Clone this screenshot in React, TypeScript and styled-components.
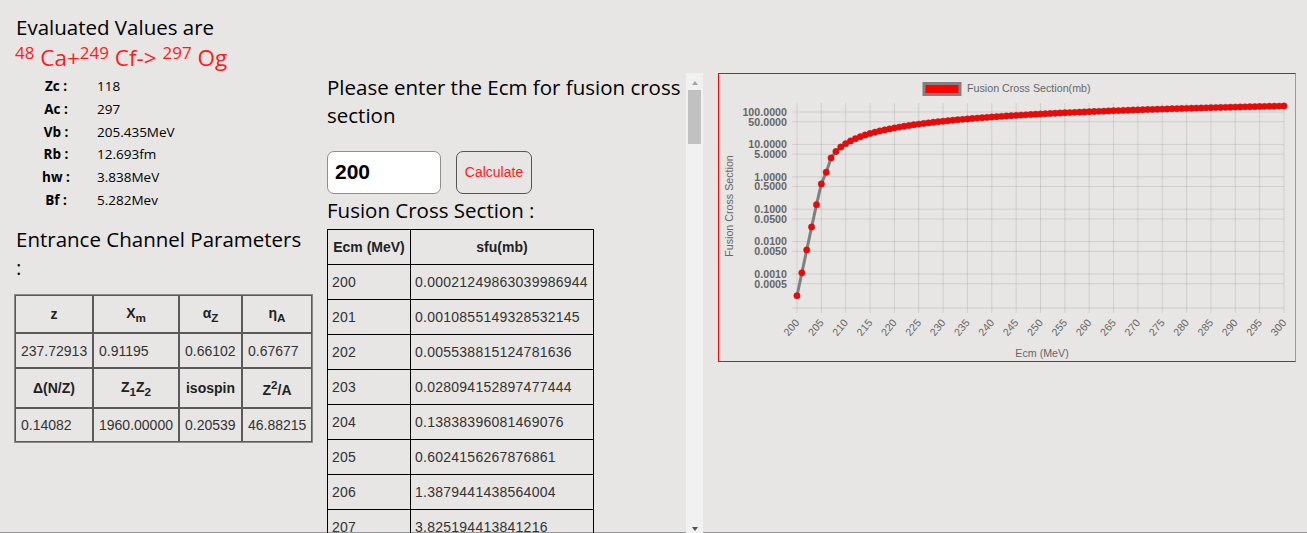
import React from 'react';
import styled, { createGlobalStyle } from 'styled-components';

const GlobalStyle = createGlobalStyle`
  html, body {
    margin: 0;
    padding: 0;
    overflow: hidden;
    background: #e7e6e5;
  }
  body {
    font-family: 'Open Sans', 'Noto Sans', sans-serif;
    color: #000;
  }
`;

const Page = styled.div`
  display: flex;
  align-items: flex-start;
  height: 533px;
  box-sizing: border-box;
  border-bottom: 1px solid #999;
`;

const LeftCol = styled.div`
  width: 313px;
  flex: none;
  box-sizing: border-box;
  padding: 13px 0 0 14px;
`;

const Heading = styled.h2<{ $top?: number; $indent?: number }>`
  margin: ${p => p.$top || 0}px 0 0 ${p => p.$indent ?? 0}px;
  font-size: 20.5px;
  font-weight: 400;
  line-height: 28px;
`;

const Reaction = styled.div`
  margin: 4px 0 0 1px;
  font-size: 22.5px;
  line-height: 26px;
  color: #ff1a1a;
`;

const Sup = styled.sup`
  font-size: 17px;
  line-height: 0;
  vertical-align: 7.5px;
`;

const ValueGrid = styled.div`
  display: grid;
  grid-template-columns: 80px auto;
  grid-auto-rows: 22.7px;
  align-items: center;
  margin: 4px 0 0 2px;
  font-size: 13.5px;
`;

const Label = styled.span`
  font-weight: 700;
  text-align: center;
`;

const Value = styled.span`
  padding-left: 1px;
`;

const ParamTable = styled.table`
  margin-top: 13px;
  table-layout: fixed;
  width: 299px;
  border-collapse: separate;
  border-spacing: 0;
  border: 1px solid #8a8a8a;
  font-family: 'Liberation Sans', Arial, sans-serif;
  font-size: 14px;
  color: #333;
`;

const Col = styled.col<{ $w: number }>`
  width: ${p => p.$w}px;
`;

const ParamRow = styled.tr<{ $h: number }>`
  height: ${p => p.$h}px;
`;

const ParamHead = styled.th`
  border: 1px solid #5a5a5a;
  padding: 0 2px;
  font-weight: 700;
  color: #222;
  text-align: center;
  white-space: nowrap;
`;

const ParamCell = styled.td`
  border: 1px solid #5a5a5a;
  padding: 0 2px 0 5px;
  white-space: nowrap;
`;

const MidPanel = styled.div`
  display: flex;
  width: 390px;
  height: 466px;
  flex: none;
  margin-top: 73px;
`;

const ScrollContent = styled.div`
  flex: 1;
  min-width: 0;
  padding-left: 14px;
  overflow: hidden;
`;

const ScrollBar = styled.div`
  display: flex;
  flex-direction: column;
  width: 17px;
  flex: none;
  background: #f1f1f1;
`;

const ArrowButton = styled.div`
  display: flex;
  justify-content: center;
  height: 17px;
  flex: none;
`;

const Arrow = styled.span<{ $down?: boolean }>`
  width: 0;
  height: 0;
  margin-top: ${p => (p.$down ? 5 : 8)}px;
  border-left: 3.5px solid transparent;
  border-right: 3.5px solid transparent;
  ${p =>
    p.$down ? 'border-top: 4px solid #505050;' : 'border-bottom: 4px solid #a3a3a3;'}
`;

const Track = styled.div`
  flex: 1;
  padding: 0 2px;
`;

const Thumb = styled.div`
  height: 54px;
  background: #c1c1c1;
`;

const InputRow = styled.div`
  display: flex;
  gap: 15px;
  margin-top: 21.5px;
`;

const EcmInput = styled.input`
  width: 114px;
  height: 43px;
  box-sizing: border-box;
  padding: 0 0 0 7px;
  border: 1px solid #8f8f8f;
  border-radius: 7px;
  background: #fff;
  font-family: 'Liberation Sans', Arial, sans-serif;
  font-size: 21px;
  font-weight: 700;
  color: #000;
  outline: none;
`;

const CalcButton = styled.button`
  width: 76px;
  height: 43px;
  padding: 0;
  border: 1px solid #555;
  border-radius: 7px;
  background: transparent;
  font-family: 'Liberation Sans', Arial, sans-serif;
  font-size: 14px;
  color: #ff1a1a;
`;

const ResultTable = styled.table`
  margin-top: 5px;
  table-layout: fixed;
  width: 266px;
  border-collapse: collapse;
  font-family: 'Liberation Sans', Arial, sans-serif;
  font-size: 14px;
  color: #333;
`;

const ResultRow = styled.tr`
  height: 35px;
`;

const ResultHead = styled.th`
  border: 1px solid #000;
  padding: 0 4px;
  font-weight: 700;
  color: #222;
  text-align: center;
  white-space: nowrap;
`;

const ResultCell = styled.td`
  border: 1px solid #000;
  padding: 0 4px;
  letter-spacing: 0.25px;
  white-space: nowrap;
`;

const ChartBox = styled.div`
  width: 578px;
  height: 289px;
  flex: none;
  margin: 73px 0 0 15px;
  box-sizing: border-box;
  border: 1px solid #ff0000;
  border-right-color: #ff7070;
`;

const ChartSvg = styled.svg`
  display: block;
  font-family: 'Liberation Sans', Arial, sans-serif;
`;

// Wong formula, roughly fitted to the plotted curve
const Rb = 12.693;
const hw = 3.838;
const Vb = 205.435;
const sigma = (e: number) =>
  (0.96 * Rb * Rb * hw) / (2 * e) * Math.log(1 + Math.exp((2 * Math.PI * (e - Vb)) / hw));

const known: Record<number, string> = {
  200: '0.00021249863039986944',
  201: '0.0010855149328532145',
  202: '0.005538815124781636',
  203: '0.028094152897477444',
  204: '0.13838396081469076',
  205: '0.6024156267876861',
  206: '1.3879441438564004',
  207: '3.825194413841216',
};

const results = Array.from({ length: 101 }, (_, i) => {
  const e = 200 + i;
  const text = known[e] ?? String(sigma(e));
  return { e, text, value: Number(text) };
});

// only the rows that show above the fold of the panel
const tableRows = results.slice(0, 8);

const values = [
  ['Zc :', '118'],
  ['Ac :', '297'],
  ['Vb :', '205.435MeV'],
  ['Rb :', '12.693fm'],
  ['hw :', '3.838MeV'],
  ['Bf :', '5.282Mev'],
];

const X0 = 78;
const X1 = 565;
const xOf = (e: number) => X0 + ((e - 200) * (X1 - X0)) / 100;
const yOf = (v: number) => 38 - (Math.log10(v) - 2) * 32.4;
const Y_TOP = 29;
const Y_BOTTOM = 234;

const yTicks = [
  [100, '100.0000'],
  [50, '50.0000'],
  [10, '10.0000'],
  [5, '5.0000'],
  [1, '1.0000'],
  [0.5, '0.5000'],
  [0.1, '0.1000'],
  [0.05, '0.0500'],
  [0.01, '0.0100'],
  [0.005, '0.0050'],
  [0.001, '0.0010'],
  [0.0005, '0.0005'],
] as const;

const xTicks = Array.from({ length: 21 }, (_, i) => 200 + i * 5);

const CrossSectionChart: React.FC = () => {
  const pts = results.map(r => [xOf(r.e), yOf(r.value)]);
  const grid = 'rgba(0,0,0,0.1)';
  return (
    <ChartSvg width="576" height="287" viewBox="0 0 576 287">
      <rect x="205" y="9.5" width="36" height="11" fill="#ff0000" stroke="#808080" strokeWidth="3" />
      <text x="248" y="18" fontSize="10.7" fill="#666">Fusion Cross Section(mb)</text>

      {xTicks.map(t => (
        <line key={t} x1={xOf(t)} x2={xOf(t)} y1={Y_TOP} y2={Y_BOTTOM + 5} stroke={grid} />
      ))}
      {yTicks.map(([v]) => (
        <line key={v} x1={X0 - 5} x2={X1} y1={yOf(v)} y2={yOf(v)} stroke={grid} />
      ))}
      <line x1={X0 - 5} x2={X1} y1={Y_BOTTOM} y2={Y_BOTTOM} stroke={grid} />

      {yTicks.map(([v, label]) => (
        <text key={label} x="68" y={yOf(v) + 3.8} fontSize="10.7" fontWeight="700" fill="#666" textAnchor="end">
          {label}
        </text>
      ))}
      {xTicks.map(t => (
        <text
          key={t}
          fontSize="10.7"
          fill="#666"
          textAnchor="end"
          transform={`translate(${xOf(t) + 3} 249) rotate(-50)`}
        >
          {t}
        </text>
      ))}
      <text x="323" y="283" fontSize="10.7" fill="#666" textAnchor="middle">Ecm (MeV)</text>
      <text fontSize="10.7" fill="#666" textAnchor="middle" transform="translate(14 132) rotate(-90)">
        Fusion Cross Section
      </text>

      <polyline
        points={pts.map(p => p.join(',')).join(' ')}
        fill="none"
        stroke="#808080"
        strokeWidth="3"
        strokeLinejoin="round"
      />
      {pts.map(([x, y], i) => (
        <circle key={i} cx={x} cy={y} r="3.2" fill="#ff0000" stroke="rgba(120,60,60,0.6)" strokeWidth="0.8" />
      ))}
    </ChartSvg>
  );
};

export default function App() {
  return (
    <>
      <GlobalStyle />
      <Page>
        <LeftCol>
          <Heading $indent={2}>Evaluated Values are</Heading>
          <Reaction>
            <Sup>48</Sup> Ca+<Sup>249</Sup> Cf-&gt; <Sup>297</Sup> Og
          </Reaction>
          <ValueGrid>
            {values.map(([k, v]) => (
              <React.Fragment key={k}>
                <Label>{k}</Label>
                <Value>{v}</Value>
              </React.Fragment>
            ))}
          </ValueGrid>
          <Heading $top={14} $indent={2}>
            Entrance Channel Parameters
            <br />:
          </Heading>
          <ParamTable>
            <colgroup>
              <Col $w={78} />
              <Col $w={86} />
              <Col $w={63} />
              <Col $w={70} />
            </colgroup>
            <tbody>
              <ParamRow $h={38}>
                <ParamHead>z</ParamHead>
                <ParamHead>X<sub>m</sub></ParamHead>
                <ParamHead>α<sub>Z</sub></ParamHead>
                <ParamHead>η<sub>A</sub></ParamHead>
              </ParamRow>
              <ParamRow $h={35}>
                <ParamCell>237.72913</ParamCell>
                <ParamCell>0.91195</ParamCell>
                <ParamCell>0.66102</ParamCell>
                <ParamCell>0.67677</ParamCell>
              </ParamRow>
              <ParamRow $h={40}>
                <ParamHead>Δ(N/Z)</ParamHead>
                <ParamHead>Z<sub>1</sub>Z<sub>2</sub></ParamHead>
                <ParamHead>isospin</ParamHead>
                <ParamHead>Z<sup>2</sup>/A</ParamHead>
              </ParamRow>
              <ParamRow $h={34}>
                <ParamCell>0.14082</ParamCell>
                <ParamCell>1960.00000</ParamCell>
                <ParamCell>0.20539</ParamCell>
                <ParamCell>46.88215</ParamCell>
              </ParamRow>
            </tbody>
          </ParamTable>
        </LeftCol>

        <MidPanel>
          <ScrollContent>
            <Heading>Please enter the Ecm for fusion cross section</Heading>
            <InputRow>
              <EcmInput defaultValue="200" />
              <CalcButton>Calculate</CalcButton>
            </InputRow>
            <Heading $top={2}>Fusion Cross Section :</Heading>
            <ResultTable>
              <colgroup>
                <Col $w={83} />
                <Col $w={183} />
              </colgroup>
              <tbody>
                <ResultRow>
                  <ResultHead>Ecm (MeV)</ResultHead>
                  <ResultHead>sfu(mb)</ResultHead>
                </ResultRow>
                {tableRows.map(r => (
                  <ResultRow key={r.e}>
                    <ResultCell>{r.e}</ResultCell>
                    <ResultCell>{r.text}</ResultCell>
                  </ResultRow>
                ))}
              </tbody>
            </ResultTable>
          </ScrollContent>
          <ScrollBar>
            <ArrowButton>
              <Arrow />
            </ArrowButton>
            <Track>
              <Thumb />
            </Track>
            <ArrowButton>
              <Arrow $down />
            </ArrowButton>
          </ScrollBar>
        </MidPanel>

        <ChartBox>
          <CrossSectionChart />
        </ChartBox>
      </Page>
    </>
  );
}
